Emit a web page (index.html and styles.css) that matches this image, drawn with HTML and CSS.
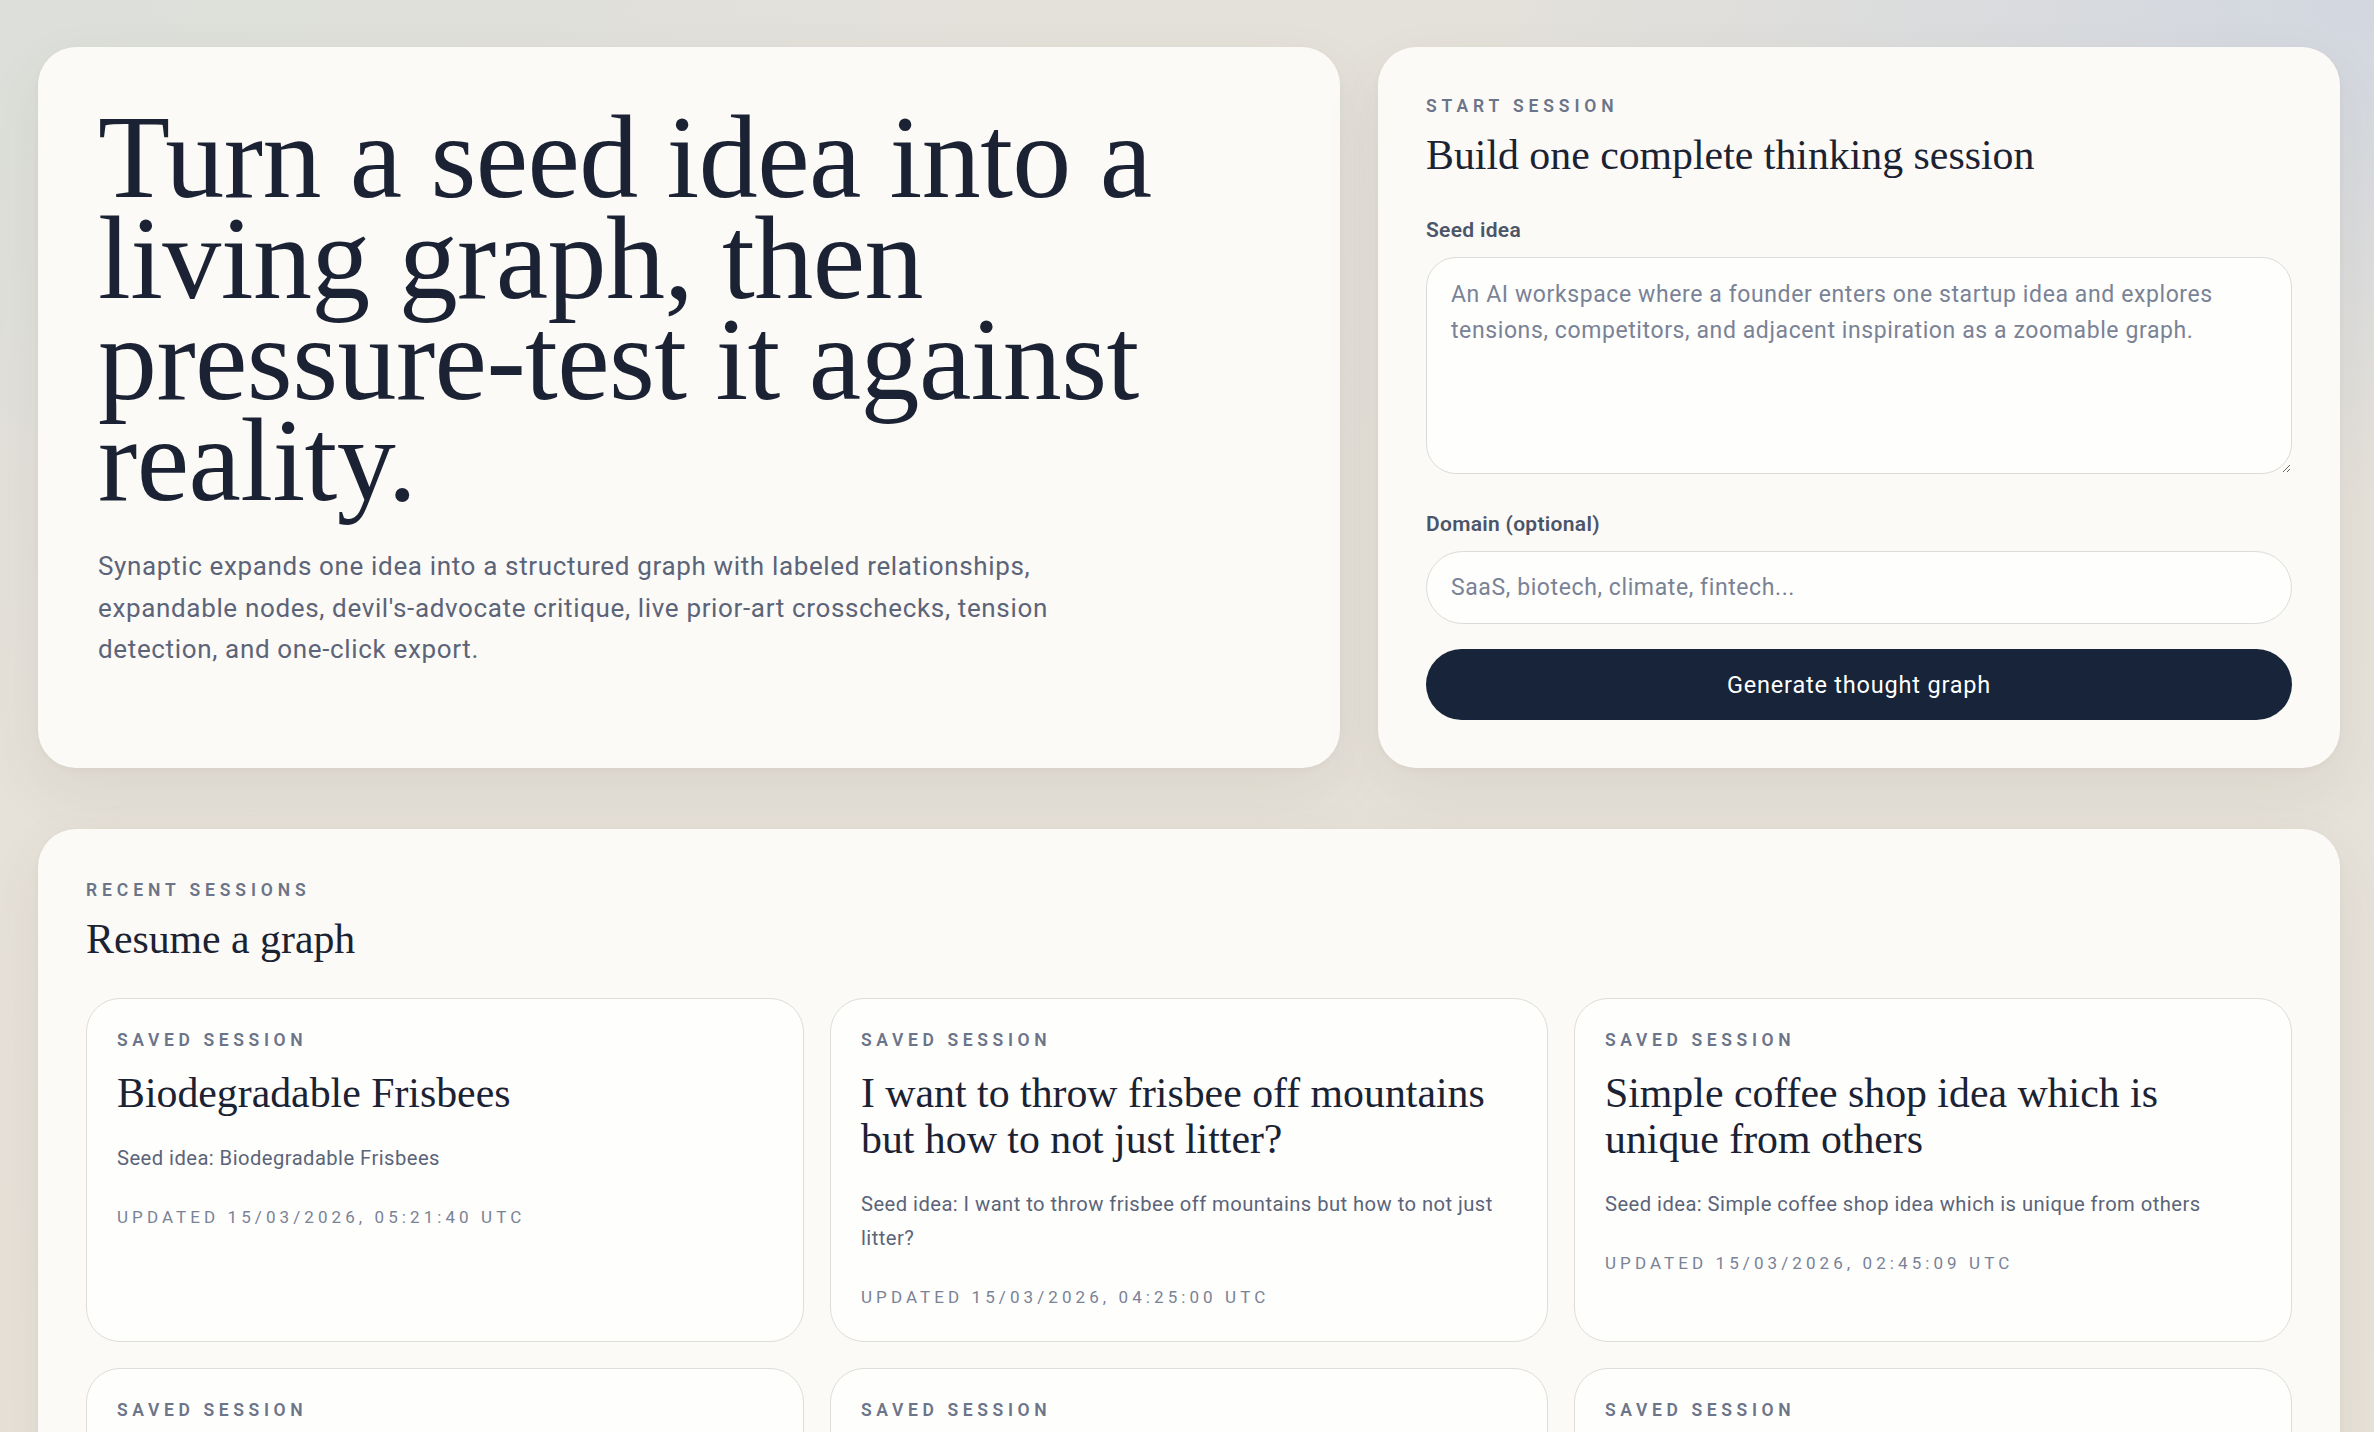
FILE: index.html
```html
<!DOCTYPE html>
<html lang="en">
<head>
<meta charset="utf-8">
<title>Synaptic</title>
<link rel="stylesheet" href="styles.css">
</head>
<body>
<main class="page">
  <section class="top-grid">
    <div class="panel hero">
      <h1 class="hero-title">Turn a seed idea into a<br>living graph, then<br>pressure-test it against<br>reality.</h1>
      <p class="hero-copy">Synaptic expands one idea into a structured graph with labeled relationships, expandable nodes, devil's-advocate critique, live prior-art crosschecks, tension detection, and one-click export.</p>
    </div>
    <form class="panel start">
      <div class="eyebrow">Start session</div>
      <h2 class="section-title">Build one complete thinking session</h2>
      <label class="field">
        <span class="field-label">Seed idea</span>
        <textarea class="textarea" placeholder="An AI workspace where a founder enters one startup idea and explores tensions, competitors, and adjacent inspiration as a zoomable graph."></textarea>
      </label>
      <label class="field">
        <span class="field-label">Domain (optional)</span>
        <input class="input" type="text" placeholder="SaaS, biotech, climate, fintech...">
      </label>
      <button class="primary" type="button">Generate thought graph</button>
    </form>
  </section>

  <section class="panel recent">
    <div class="eyebrow">Recent sessions</div>
    <h2 class="section-title">Resume a graph</h2>
    <div class="session-grid">
      <article class="session">
        <div class="eyebrow small">Saved session</div>
        <h3 class="session-title">Biodegradable Frisbees</h3>
        <p class="session-seed">Seed idea: Biodegradable Frisbees</p>
        <div class="session-date">Updated 15/03/2026, 05:21:40 UTC</div>
      </article>
      <article class="session">
        <div class="eyebrow small">Saved session</div>
        <h3 class="session-title">I want to throw frisbee off mountains but how to not just litter?</h3>
        <p class="session-seed">Seed idea: I want to throw frisbee off mountains but how to not just litter?</p>
        <div class="session-date">Updated 15/03/2026, 04:25:00 UTC</div>
      </article>
      <article class="session">
        <div class="eyebrow small">Saved session</div>
        <h3 class="session-title">Simple coffee shop idea which is unique from others</h3>
        <p class="session-seed">Seed idea: Simple coffee shop idea which is unique from others</p>
        <div class="session-date">Updated 15/03/2026, 02:45:09 UTC</div>
      </article>
      <article class="session">
        <div class="eyebrow small">Saved session</div>
      </article>
      <article class="session">
        <div class="eyebrow small">Saved session</div>
      </article>
      <article class="session">
        <div class="eyebrow small">Saved session</div>
      </article>
    </div>
  </section>
</main>
</body>
</html>
```

FILE: styles.css
```css
* { box-sizing: border-box; }

html, body {
  margin: 0;
  height: 100%;
}

body {
  font-family: Roboto, "Noto Sans", "Liberation Sans", sans-serif;
  color: #1b2233;
  background:
    radial-gradient(ellipse 900px 500px at 100% 0%, #d2d7e0 0%, rgba(210,215,224,0) 100%),
    radial-gradient(ellipse 1100px 700px at 0% 0%, #dcdfda 0%, rgba(220,223,218,0) 100%),
    linear-gradient(180deg, #e4e1da 0%, #e7e2d8 100%);
  overflow: hidden;
}

.page {
  padding: 47px 34px 0 38px;
  display: flex;
  flex-direction: column;
  gap: 61px;
}

.top-grid {
  display: grid;
  grid-template-columns: 1302px 1fr;
  gap: 38px;
}

.panel {
  background: #fcfaf6;
  border-radius: 38px;
  box-shadow: 0 24px 60px rgba(90, 80, 60, 0.08), 0 2px 6px rgba(90, 80, 60, 0.04);
}

.hero {
  padding: 60px 60px;
  min-height: 720px;
}

.hero-title {
  margin: 0;
  font-family: "Liberation Serif", "Times New Roman", serif;
  font-weight: 400;
  font-size: 118px;
  line-height: 101px;
  letter-spacing: -0.6px;
  color: #1b2233;
}

.hero-copy {
  margin: 35px 0 0;
  max-width: 1010px;
  font-size: 26px;
  line-height: 41.6px;
  letter-spacing: 0.65px;
  color: #5b6478;
}

.start {
  padding: 47px 48px 48px;
  display: flex;
  flex-direction: column;
}

.eyebrow {
  font-size: 17.5px;
  line-height: 24px;
  font-weight: 600;
  letter-spacing: 0.28em;
  text-transform: uppercase;
  color: #6b7488;
}

.section-title {
  margin: 13px 0 0;
  font-family: "Liberation Serif", "Times New Roman", serif;
  font-weight: 400;
  font-size: 41.8px;
  line-height: 48px;
  color: #1b2233;
}

.field {
  display: flex;
  flex-direction: column;
  gap: 13px;
  margin-top: 37px;
}

.field + .field { margin-top: 36px; }

.field-label {
  font-size: 21px;
  line-height: 28px;
  font-weight: 600;
  letter-spacing: 0.3px;
  color: #4b556a;
}

.textarea, .input {
  font-family: Roboto, "Noto Sans", "Liberation Sans", sans-serif;
  font-size: 23px;
  letter-spacing: 0.6px;
  color: #1b2233;
  background: #fefefd;
  border: 1.5px solid #dcdbd8;
  outline: none;
}

.textarea {
  height: 217px;
  border-radius: 30px;
  padding: 19px 24px;
  line-height: 36px;
  resize: vertical;
}

.input {
  height: 73px;
  border-radius: 37px;
  padding: 0 24px;
}

.textarea::placeholder, .input::placeholder {
  color: #7a8296;
  opacity: 1;
}

.primary {
  margin-top: 25px;
  height: 71px;
  border: 0;
  border-radius: 36px;
  background: #172439;
  color: #ffffff;
  font-family: Roboto, "Noto Sans", "Liberation Sans", sans-serif;
  font-size: 23.5px;
  letter-spacing: 0.8px;
  cursor: pointer;
}

.recent {
  padding: 49px 48px 48px;
  border-bottom-left-radius: 0;
  border-bottom-right-radius: 0;
}

.session-grid {
  margin-top: 35px;
  display: grid;
  grid-template-columns: repeat(3, 1fr);
  gap: 26px;
}

.session {
  background: #fefefd;
  border: 1.5px solid #dfddd9;
  border-radius: 34px;
  padding: 29px 30px 32px;
  min-height: 300px;
}

.eyebrow.small {
  letter-spacing: 0.265em;
}

.session-title {
  margin: 18px 0 0;
  font-family: "Liberation Serif", "Times New Roman", serif;
  font-weight: 400;
  font-size: 41.8px;
  line-height: 46px;
  color: #1b2233;
}

.session-seed {
  margin: 25px 0 0;
  font-size: 20.2px;
  line-height: 34px;
  letter-spacing: 0.45px;
  color: #5b6478;
}

.session-date {
  margin-top: 30px;
  font-size: 17px;
  line-height: 24px;
  letter-spacing: 0.24em;
  text-transform: uppercase;
  color: #7a8296;
}
```
